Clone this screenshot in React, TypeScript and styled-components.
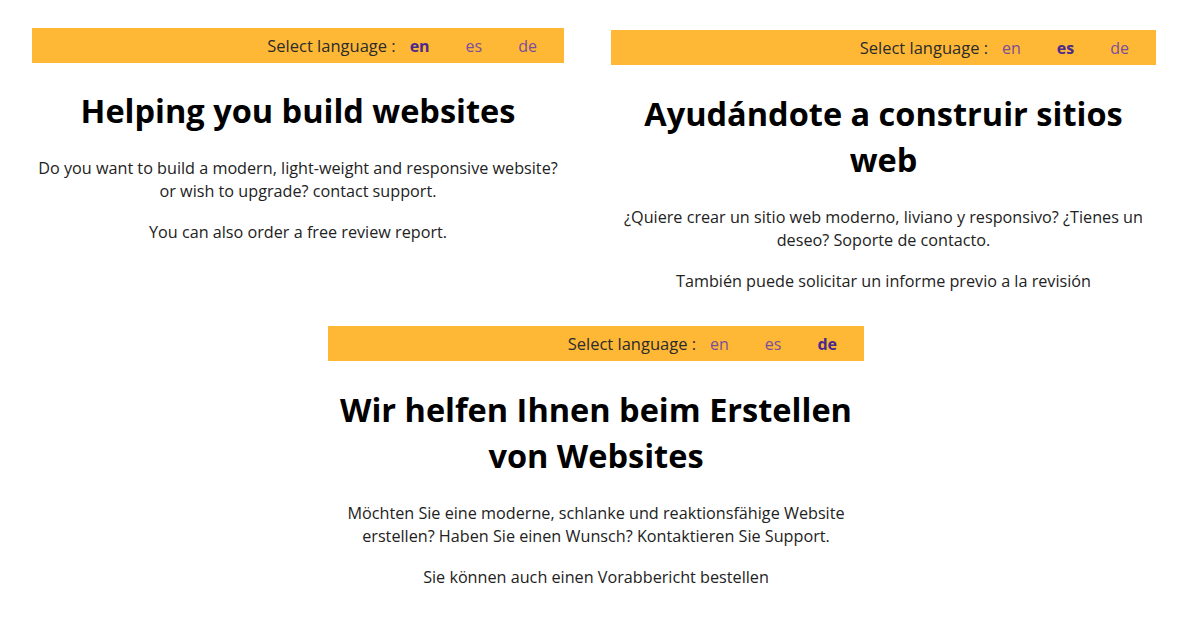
import React from 'react'
import styled, { createGlobalStyle } from 'styled-components'

const GlobalStyle = createGlobalStyle`
  html, body {
    margin: 0;
    padding: 0;
    background: #ffffff;
  }
  body {
    font-family: "Open Sans", "Noto Sans", "DejaVu Sans", sans-serif;
    color: #222222;
  }
`

type Lang = 'en' | 'es' | 'de'

type Content = {
  heading: React.ReactNode
  lines: React.ReactNode
  extra: string
}

const content: Record<Lang, Content> = {
  en: {
    heading: 'Helping you build websites',
    lines: (
      <>
        Do you want to build a modern, light-weight and responsive website?
        <br />
        or wish to upgrade? contact support.
      </>
    ),
    extra: 'You can also order a free review report.',
  },
  es: {
    heading: (
      <>
        Ayudándote a construir sitios
        <br />
        web
      </>
    ),
    lines: (
      <>
        ¿Quiere crear un sitio web moderno, liviano y responsivo? ¿Tienes un
        <br />
        deseo? Soporte de contacto.
      </>
    ),
    extra: 'También puede solicitar un informe previo a la revisión',
  },
  de: {
    heading: (
      <>
        Wir helfen Ihnen beim Erstellen
        <br />
        von Websites
      </>
    ),
    lines: (
      <>
        Möchten Sie eine moderne, schlanke und reaktionsfähige Website
        <br />
        erstellen? Haben Sie einen Wunsch? Kontaktieren Sie Support.
      </>
    ),
    extra: 'Sie können auch einen Vorabbericht bestellen',
  },
}

const langs: Lang[] = ['en', 'es', 'de']

type PanelProps = {
  lang: Lang
  width: number
  offset: number
  gap: number
}

function Panel({ lang, width, offset, gap }: PanelProps) {
  const c = content[lang]
  return (
    <Card $width={width} $offset={offset}>
      <Bar>
        <Label>Select language :</Label>
        {langs.map((l) => (
          <LangLink key={l} $active={l === lang}>
            {l}
          </LangLink>
        ))}
      </Bar>
      <Body $gap={gap}>
        <Heading>{c.heading}</Heading>
        <Text>{c.lines}</Text>
        <Text>{c.extra}</Text>
      </Body>
    </Card>
  )
}

export default function App() {
  return (
    <>
      <GlobalStyle />
      <Page>
        <TopRow>
          <Panel lang="en" width={532} offset={28} gap={25} />
          <Panel lang="es" width={545} offset={30} gap={26} />
        </TopRow>
        <BottomRow>
          <Panel lang="de" width={536} offset={0} gap={26} />
        </BottomRow>
      </Page>
    </>
  )
}

const Page = styled.div`
  width: 1200px;
  height: 628px;
  overflow: hidden;
`

const TopRow = styled.div`
  display: flex;
  align-items: flex-start;
  gap: 47px;
  padding-left: 32px;
  height: 326px;
`

const BottomRow = styled.div`
  display: flex;
  padding-left: 328px;
`

const Card = styled.section<{ $width: number; $offset: number }>`
  width: ${(p) => p.$width}px;
  margin-top: ${(p) => p.$offset}px;
`

const Bar = styled.div`
  height: 35px;
  background: #ffb836;
  display: flex;
  align-items: center;
  justify-content: flex-end;
  padding-right: 27px;
  font-size: 16px;
  color: #2b2b2b;
`

const Label = styled.span`
  font-size: 16.5px;
  margin-right: 14px;
`

const LangLink = styled.a<{ $active: boolean }>`
  color: ${(p) => (p.$active ? '#4a2a8c' : '#7b4e9c')};
  font-weight: ${(p) => (p.$active ? 700 : 400)};
  text-decoration: none;
  & + & {
    margin-left: 36px;
  }
`

const Body = styled.div<{ $gap: number }>`
  text-align: center;
  padding: ${(p) => p.$gap}px 2px 0;
`

const Heading = styled.h1`
  font-size: 32.5px;
  font-weight: 700;
  line-height: 46px;
  margin: 0 0 23px;
  color: #000000;
`

const Text = styled.p`
  font-size: 16.2px;
  line-height: 23px;
  margin: 0 0 18px;
  color: #222222;
`
